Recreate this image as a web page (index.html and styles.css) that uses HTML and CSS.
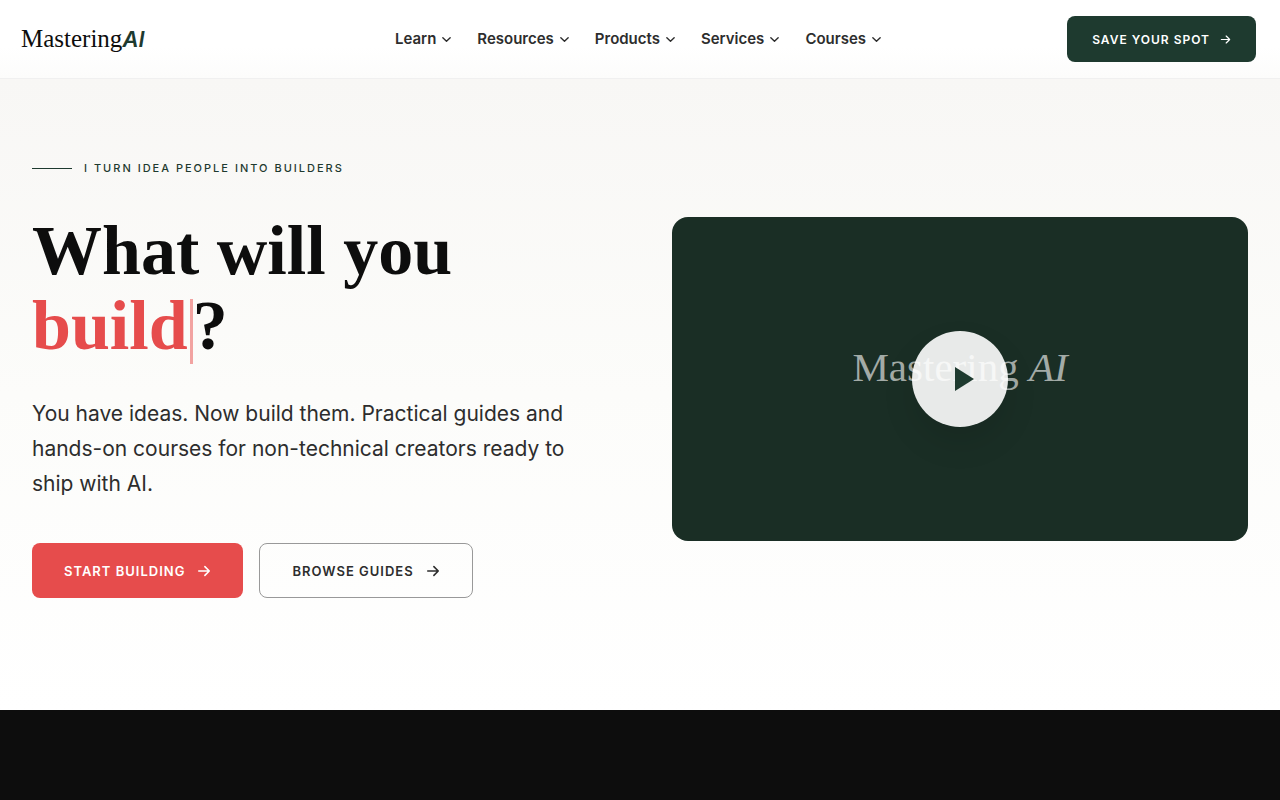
FILE: index.html
```html
<!DOCTYPE html>
<html lang="en">
<head>
  <meta charset="UTF-8">
  <meta name="viewport" content="width=device-width, initial-scale=1.0">
  <title>Mastering AI</title>
  <link rel="stylesheet" href="styles.css">
</head>
<body>

  <header class="header">
    <a class="logo" href="#">Mastering<span class="logo-ai">AI</span></a>

    <nav class="nav" aria-label="Main">
      <button class="nav-item" type="button">Learn
        <svg class="chevron" viewBox="0 0 12 12" aria-hidden="true"><path d="M2 4l4 4 4-4"/></svg>
      </button>
      <button class="nav-item" type="button">Resources
        <svg class="chevron" viewBox="0 0 12 12" aria-hidden="true"><path d="M2 4l4 4 4-4"/></svg>
      </button>
      <button class="nav-item" type="button">Products
        <svg class="chevron" viewBox="0 0 12 12" aria-hidden="true"><path d="M2 4l4 4 4-4"/></svg>
      </button>
      <button class="nav-item" type="button">Services
        <svg class="chevron" viewBox="0 0 12 12" aria-hidden="true"><path d="M2 4l4 4 4-4"/></svg>
      </button>
      <button class="nav-item" type="button">Courses
        <svg class="chevron" viewBox="0 0 12 12" aria-hidden="true"><path d="M2 4l4 4 4-4"/></svg>
      </button>
    </nav>

    <a class="btn btn-small" href="#">Save your spot
      <svg class="arrow" viewBox="0 0 16 16" aria-hidden="true"><path d="M2 8h12M9 3l5 5-5 5"/></svg>
    </a>
  </header>

  <main>
    <section class="hero">
      <div class="hero-text">
        <p class="eyebrow">I turn idea people into builders</p>
        <h1 class="title">What will you<br><span class="typed">build</span>?</h1>
        <p class="lead">You have ideas. Now build them. Practical guides and hands-on courses for non-technical creators ready to ship with AI.</p>
        <div class="actions">
          <a class="btn btn-primary" href="#">Start building
            <svg class="arrow" viewBox="0 0 16 16" aria-hidden="true"><path d="M2 8h12M9 3l5 5-5 5"/></svg>
          </a>
          <a class="btn btn-outline" href="#">Browse guides
            <svg class="arrow" viewBox="0 0 16 16" aria-hidden="true"><path d="M2 8h12M9 3l5 5-5 5"/></svg>
          </a>
        </div>
      </div>

      <div class="video">
        <span class="video-title">Mastering <em>AI</em></span>
        <button class="play" type="button" aria-label="Play video">
          <svg class="play-icon" viewBox="0 0 20 24" aria-hidden="true"><path d="M0 0l19 12L0 24z"/></svg>
        </button>
      </div>
    </section>

    <section class="dark"></section>
  </main>

</body>
</html>
```

FILE: styles.css
```css
* {
  box-sizing: border-box;
}

body {
  margin: 0;
  font-family: Inter, "Liberation Sans", sans-serif;
  color: #2d2d2d;
  background: #fff;
}

a {
  color: inherit;
  text-decoration: none;
}

button {
  font: inherit;
  color: inherit;
  border: 0;
  padding: 0;
  background: none;
  cursor: pointer;
}

svg {
  fill: none;
  stroke: currentColor;
  stroke-linecap: round;
  stroke-linejoin: round;
}

/* Header */
.header {
  display: grid;
  grid-template-columns: 1fr auto 1fr;
  align-items: center;
  padding: 16px 24px 16px 21px;
  background: linear-gradient(#fff 60%, #fcfcfb);
  border-bottom: 1px solid #f0f0f0;
}

.logo {
  font: 25px/32px "Liberation Serif", serif;
  color: #0d0d0d;
}

.logo-ai {
  font: italic 600 22px/32px Inter, "Liberation Sans", sans-serif;
  color: #1e3a2f;
}

.nav {
  display: flex;
  gap: 25px;
}

.nav-item {
  display: flex;
  align-items: center;
  gap: 5px;
  font-size: 15px;
  line-height: 20px;
  font-weight: 600;
}

.chevron {
  width: 11px;
  height: 11px;
  stroke-width: 1.5;
}

/* Buttons */
.btn {
  display: inline-flex;
  align-items: center;
  gap: 12px;
  padding: 0 32px;
  height: 55px;
  border-radius: 8px;
  font-size: 13px;
  font-weight: 600;
  letter-spacing: 1px;
  text-transform: uppercase;
}

.arrow {
  width: 14px;
  height: 14px;
  stroke-width: 1.8;
}

.btn-small {
  justify-self: end;
  gap: 10px;
  height: 46px;
  padding: 0 25px;
  font-size: 12px;
  color: #fff;
  background: #1e3a2f;
}

.btn-small .arrow {
  width: 11px;
  height: 11px;
}

.btn-primary {
  color: #fff;
  background: #e64c4c;
}

.btn-outline {
  border: 1px solid #999;
}

/* Hero */
.hero {
  display: grid;
  grid-template-columns: 1fr 1fr;
  align-items: center;
  gap: 64px;
  padding: 80px 32px 112px;
  background: linear-gradient(#f8f7f5, #fcfcfa 50%, #fff);
}

.eyebrow {
  display: flex;
  align-items: center;
  gap: 12px;
  margin: 0 0 36px;
  font-size: 11px;
  line-height: 18px;
  font-weight: 500;
  letter-spacing: 2px;
  text-transform: uppercase;
  color: #1e3a2f;
}

.eyebrow::before {
  content: "";
  width: 40px;
  height: 1px;
  background: #1e3a2f;
}

.title {
  margin: 0 0 32px;
  font: 700 70px/75px "Liberation Serif", serif;
  color: #0d0d0d;
}

.typed {
  color: #e64c4c;
}

.typed::after {
  content: "";
  display: inline-block;
  width: 3px;
  height: 65px;
  margin-left: 2px;
  vertical-align: -15px;
  background: #f2a3a1;
}

.lead {
  max-width: 560px;
  margin: 0 0 42px;
  font-size: 21px;
  line-height: 35px;
}

.actions {
  display: flex;
  gap: 16px;
}

/* Video */
.video {
  position: relative;
  display: flex;
  align-items: center;
  justify-content: center;
  aspect-ratio: 16 / 9;
  padding-bottom: 24px;
  border-radius: 16px;
  background: #1a2e25;
}

.video-title {
  font: 41px/48px "Liberation Serif", serif;
  color: #a3aba7;
}

.play {
  position: absolute;
  inset: 0;
  display: flex;
  align-items: center;
  justify-content: center;
  width: 96px;
  height: 96px;
  margin: auto;
  padding-left: 10px;
  border-radius: 50%;
  color: #1e3a2f;
  background: rgba(255, 255, 255, 0.9);
  box-shadow: 0 16px 32px rgba(0, 0, 0, 0.1);
}

.play-icon {
  width: 20px;
  height: 24px;
  fill: currentColor;
  stroke: none;
}

.dark {
  min-height: 90px;
  background: #0d0d0d;
}
```
